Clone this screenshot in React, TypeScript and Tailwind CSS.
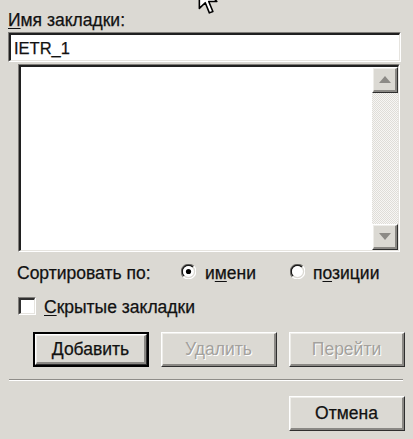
import React from "react";

const Raised = ({
  w,
  h,
  children,
  def = false,
  className = "",
}: {
  w: string;
  h: string;
  children?: React.ReactNode;
  def?: boolean;
  className?: string;
}) => {
  const inner = (
    <div className="flex-1 flex border-t border-l border-t-white border-l-white border-r border-b border-r-[#2e2e2e] border-b-[#2e2e2e]">
      <div className="flex-1 flex items-center justify-center border-t border-l border-t-[#eeede9] border-l-[#eeede9] border-r-2 border-b-2 border-r-[#8a8884] border-b-[#8a8884] bg-[#dbd9d3]">
        {children}
      </div>
    </div>
  );
  return (
    <div className={`${w} ${h} flex ${def ? "border-2 border-black" : ""} ${className}`}>{inner}</div>
  );
};

const Arrow = ({ up }: { up: boolean }) => (
  <svg width="12" height="7" viewBox="0 0 12 7">
    {up ? <polygon points="6,0 12,7 0,7" fill="#8c8a86" /> : <polygon points="0,0 12,0 6,7" fill="#8c8a86" />}
  </svg>
);

const Radio = ({ checked }: { checked: boolean }) => (
  <svg width="15" height="15" viewBox="0 0 15 15">
    <path d="M12.8 2.2 A7.5 7.5 0 0 0 2.2 12.8" fill="none" stroke="#7d7b77" strokeWidth="1.2" />
    <path d="M11.9 3.1 A6.2 6.2 0 0 0 3.1 11.9" fill="none" stroke="#1a1a1a" strokeWidth="1.4" />
    <path d="M2.2 12.8 A7.5 7.5 0 0 0 12.8 2.2" fill="none" stroke="#ffffff" strokeWidth="1.2" />
    <circle cx="7.5" cy="7.5" r="5.4" fill="#ffffff" />
    {checked && <circle cx="7.5" cy="7.5" r="2.6" fill="#000000" />}
  </svg>
);

export default function App() {
  return (
    <div
      className="relative w-[413px] h-[439px] overflow-hidden bg-[#dbd9d3] text-[#111111] text-[17.5px] leading-[20px] flex flex-col [-webkit-text-stroke:0.25px_#111111]"
      style={{ fontFamily: '"Liberation Sans", Arial, sans-serif' }}
    >
      {/* mouse cursor */}
      <svg
        className="absolute left-[198px] top-[-17px]"
        width="21"
        height="31"
        viewBox="0 0 12.5 19.5"
      >
        <polygon
          points="0.5,0.5 0.5,16 4.2,12.4 6.8,18.8 9,17.9 6.4,11.6 11.5,11.6"
          fill="#ffffff"
          stroke="#000000"
          strokeWidth="1"
          strokeLinejoin="round"
        />
      </svg>

      <div className="pl-[8px] pt-[10px]">
        <span className="underline underline-offset-2">И</span>мя закладки:
      </div>

      {/* input */}
      <div className="ml-[8px] mt-[2px] w-[393px] h-[30px] flex border-t border-l border-t-[#7f7d79] border-l-[#7f7d79] border-r border-b border-r-white border-b-white">
        <div className="flex-1 flex items-center bg-white border-t-2 border-l-2 border-t-[#202020] border-l-[#202020] border-r border-b border-r-[#e6e4df] border-b-[#e6e4df] pl-[3px] text-[16.5px] pt-[1px]">
          IETR_1
        </div>
      </div>

      {/* list box */}
      <div className="ml-[18px] mt-[2px] w-[382px] h-[188px] flex border-t border-l border-t-[#7f7d79] border-l-[#7f7d79] border-r border-b border-r-white border-b-white">
        <div className="flex-1 flex border-t-2 border-l-2 border-t-[#202020] border-l-[#202020] border-r border-b border-r-[#e6e4df] border-b-[#e6e4df]">
          <div className="flex-1 bg-white" />
          <div className="w-[26px] flex flex-col">
            <Raised w="w-[26px]" h="h-[26px]">
              <Arrow up />
            </Raised>
            <div className="flex-1 bg-[repeating-conic-gradient(#dfddd8_0_25%,#f7f6f4_0_50%)] bg-[length:2px_2px]" />
            <Raised w="w-[26px]" h="h-[26px]">
              <Arrow up={false} />
            </Raised>
          </div>
        </div>
      </div>

      {/* sort row */}
      <div className="mt-[11px] h-[20px] flex items-center">
        <div className="pl-[17px] w-[181px]">Сортировать по:</div>
        <div className="w-[24px] flex items-center -mt-[4px]">
          <Radio checked />
        </div>
        <div className="w-[85px]">
          и<span className="underline underline-offset-2">м</span>ени
        </div>
        <div className="w-[23px] flex items-center -mt-[4px]">
          <Radio checked={false} />
        </div>
        <div>
          п<span className="underline underline-offset-2">о</span>зиции
        </div>
      </div>

      {/* checkbox row */}
      <div className="mt-[13px] h-[20px] flex items-center">
        <div className="ml-[18px] w-[18px] h-[18px] flex border-t border-l border-t-[#7f7d79] border-l-[#7f7d79] border-r border-b border-r-white border-b-white">
          <div className="flex-1 bg-white border-t-2 border-l-2 border-t-[#303030] border-l-[#303030] border-r border-b border-r-[#e6e4df] border-b-[#e6e4df]" />
        </div>
        <div className="ml-[8px] mt-[1px]">
          <span className="underline underline-offset-2">С</span>крытые закладки
        </div>
      </div>

      {/* buttons */}
      <div className="mt-[16px] flex pl-[33px] gap-[12px]">
        <Raised w="w-[116px]" h="h-[35px]" def>
          <span>
            <span className="underline underline-offset-2">Д</span>обавить
          </span>
        </Raised>
        <Raised w="w-[116px]" h="h-[35px]">
          <span className="text-[#a3a19d] [-webkit-text-stroke:0px] [text-shadow:1px_1px_0_#ffffff]">Удалить</span>
        </Raised>
        <Raised w="w-[116px]" h="h-[35px]">
          <span className="text-[#a3a19d] [-webkit-text-stroke:0px] [text-shadow:1px_1px_0_#ffffff]">Перейти</span>
        </Raised>
      </div>

      {/* separator */}
      <div className="mt-[12px] ml-[9px] w-[394px] border-t border-t-[#8f8d89] border-b border-b-white" />

      <div className="mt-[15px] flex justify-end pr-[8px]">
        <Raised w="w-[116px]" h="h-[35px]">
          <span>Отмена</span>
        </Raised>
      </div>
    </div>
  );
}
